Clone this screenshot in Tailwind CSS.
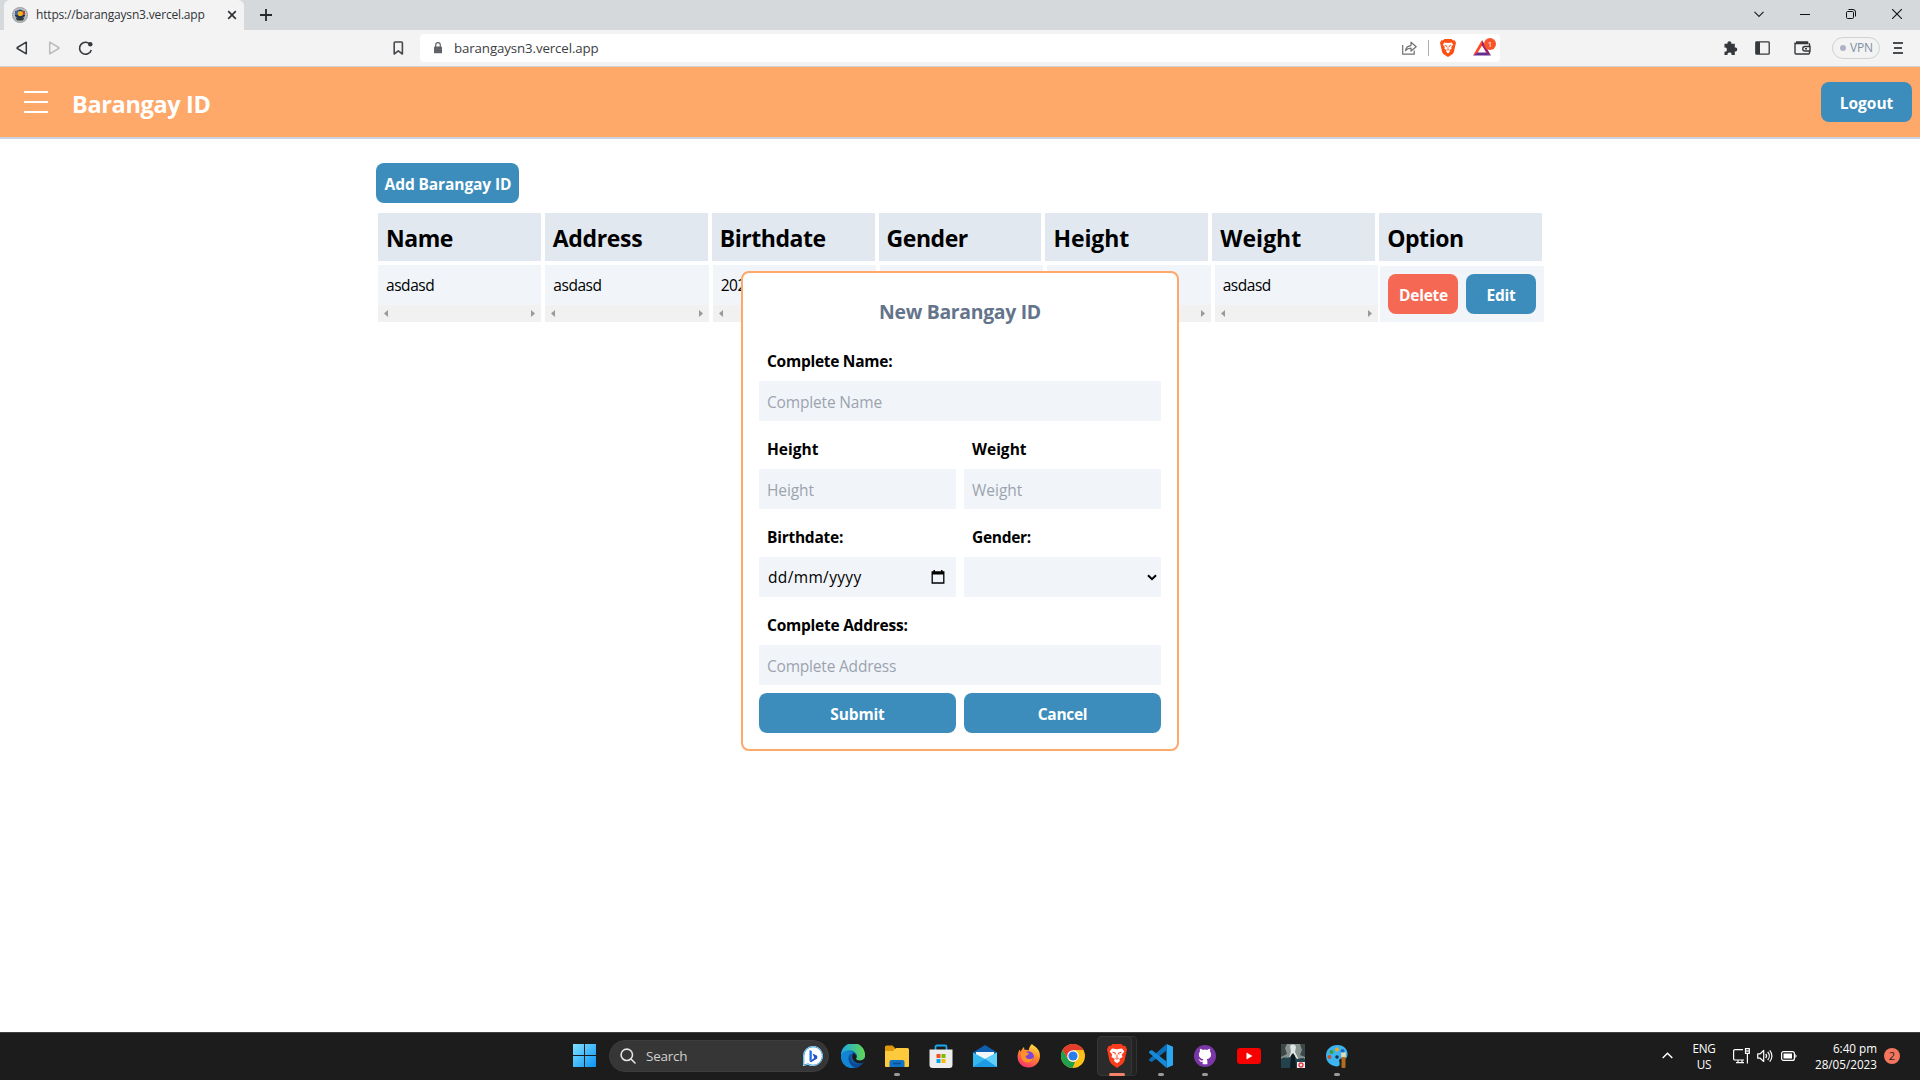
<!DOCTYPE html>
<html lang="en">
<head>
<meta charset="utf-8">
<title>Barangay ID</title>
<script src="https://cdn.jsdelivr.net/npm/@tailwindcss/browser@4"></script>
</head>
<body class="relative flex h-[1080px] w-[1920px] flex-col overflow-hidden bg-white font-['Open_Sans',sans-serif] text-[15.5px] leading-6 text-black">

<!-- Tab strip -->
<div class="flex h-[30px] shrink-0 items-center bg-[#d5d9dc] pl-1">
  <div class="flex h-full w-[240px] items-center rounded-t-md bg-[#f3f3f3] pl-2 text-[#2f3338]">
    <svg class="size-4" viewBox="0 0 16 16"><circle cx="8" cy="8" r="8" fill="#b9bdc0"/><circle cx="8" cy="8" r="7.4" fill="none" stroke="#8b8f92" stroke-width="1" stroke-dasharray="1 1"/><path d="M3 4.5 8 2.5l5 2V9L8 13.5 3 9Z" fill="#27364a"/><path d="M3 4.5 7 3v5H3Z" fill="#3f66a8"/><path d="M10 4l3 .6V8h-3Z" fill="#b8453b"/><circle cx="8.3" cy="6.5" r="2.6" fill="#f1b51c"/><path d="M3.5 10.5 8 12l4.500-1.500L11 13.500H5Z" fill="#2f3c3a"/></svg>
    <span class="ml-2 text-[12px] tracking-[-0.17px]">https://barangaysn3.vercel.app</span>
    <svg class="ml-[22px] size-[10px]" viewBox="0 0 10 10" stroke="#303438" stroke-width="1.7"><path d="m1.200 1.200 7.600 7.600M8.800 1.200 1.200 8.800"/></svg>
  </div>
  <svg class="ml-4 size-3" viewBox="0 0 12 12" stroke="#26292c" stroke-width="1.800"><path d="M6 0v12M0 6h12"/></svg>
  <div class="ml-auto flex items-center pr-[18px] pb-[2px]">
    <svg class="mr-9 h-[10px] w-[10px]" viewBox="0 0 10 10" fill="none" stroke="#222" stroke-width="1.200"><path d="m.5 2.800 4.500 4.700 4.500-4.700"/></svg>
    <svg class="mr-9 size-[10px]" viewBox="0 0 10 10" stroke="#111"><path d="M0 5.500h10"/></svg>
    <svg class="mr-9 size-[10px]" viewBox="0 0 10 10" fill="none" stroke="#111"><rect x=".5" y="2.500" width="7" height="7" rx="1.200"/><path d="M2.500.5H7A2.500 2.500 0 0 1 9.500 3v4.500"/></svg>
    <svg class="size-[10px]" viewBox="0 0 10 10" stroke="#111" stroke-width="1.100"><path d="m0 0 10 10M10 0 0 10"/></svg>
  </div>
</div>

<!-- Toolbar -->
<div class="flex h-[37px] shrink-0 items-center border-b border-[#d0d3d6] bg-[#f3f3f3] pl-[16px]">
  <svg class="h-[14px] w-3" viewBox="0 0 12 14" fill="none" stroke="#36393d" stroke-width="1.500" stroke-linejoin="round"><path d="M10.300 1.200v11.600L1.300 7.500a.6.6 0 0 1 0-1Z"/></svg>
  <svg class="ml-5 h-[14px] w-3" viewBox="0 0 12 14" fill="none" stroke="#b9bbbd" stroke-width="1.500" stroke-linejoin="round"><path d="M1.700 1.200v11.600l9-5.300a.6.6 0 0 0 0-1Z"/></svg>
  <svg class="ml-[18px] size-[15px]" viewBox="0 0 15 15"><path d="M12.600 4A6 6 0 1 0 13.300 9" fill="none" stroke="#36393d" stroke-width="1.600"/><circle cx="12.300" cy="3.300" r="2.200" fill="#36393d"/></svg>
  <svg class="ml-[300px] h-[14px] w-[11px]" viewBox="0 0 11 14" fill="none" stroke="#46494d" stroke-width="1.600" stroke-linejoin="round"><path d="M1.200 2a1 1 0 0 1 1-1h6.200a1 1 0 0 1 1 1v11L5.300 9.800 1.200 13Z"/></svg>
  <div class="ml-4 flex h-7 w-[1080px] items-center rounded bg-white pl-3.5">
    <svg class="h-3 w-2" viewBox="0 0 8 12"><path d="M1.700 5.500V3a2.300 2.300 0 0 1 4.600 0v2.500" fill="none" stroke="#5f6368" stroke-width="1.200"/><rect y="4.500" width="8" height="6.800" rx=".9" fill="#5f6368"/></svg>
    <span class="ml-3 text-[13.3px] tracking-[-0.12px] text-[#3c4043]">barangaysn3.vercel.app</span>
    <svg class="ml-auto h-[14px] w-[15px]" viewBox="0 0 15 14" fill="none" stroke="#6d7073" stroke-width="1.200" stroke-linejoin="round"><path d="M.7 4v9.200h11.500V9.500M3.500 9.600c.5-3 2.500-4.800 5.500-5V1.200l5.200 4.500L9 10V7.200c-2.400 0-4 .7-5.500 2.400Z"/></svg>
    <div class="ml-[11px] h-4 w-px bg-[#aeb0b2]"></div>
    <svg class="ml-[11px] h-[18px] w-4" viewBox="0 0 16 18"><path d="m4.500 0-1.300 1.200L1 1.600 0 4.300l.5 1.500 1.700 7.400 1.400 2L8 18l4.400-2.800 1.400-2 1.700-7.400.5-1.500-1-2.700-2.200-.4L11.500 0Z" fill="#fb4f14"/><path d="m4.300 3.500 3.700.6 3.700-.6 1.500 2.200-2 2.300.4 1.800-2.200 1.500L10 12.600 8 14.500 6 12.600l.6-1.300-2.200-1.500L4.800 8l-2-2.300Z" fill="#fff"/><path d="m4.600 6.300 2.300.6-.4 1.200M11.400 6.300l-2.300.6.4 1.200M8 8v2.300M6.800 10.500 8 11.200l1.200-.7" stroke="#fb4f14" fill="none" stroke-width=".8"/></svg>
    <div class="relative ml-[17px] mr-1 h-[18px] w-[23px]">
      <svg class="h-[18px] w-[18px]" viewBox="0 0 18 18"><path d="M9 1 0 16.500l4.500-2.500L9 6.500Z" fill="#ff4724"/><path d="m9 1 9 15.500-4.500-2.500L9 6.500Z" fill="#9e1f63"/><path d="m0 16.500 4.500-3h9l4.500 3Z" fill="#662d91"/></svg>
      <div class="absolute -top-px right-0 flex size-3 items-center justify-center rounded-full bg-[#fb542b] text-[8px] leading-none text-white">1</div>
    </div>
  </div>
  <div class="ml-auto flex items-center pr-[17px]">
    <svg class="h-[15px] w-[15px]" viewBox="0 0 15 15" fill="#34383c"><path d="M1.500 2.800h3a2 2 0 1 1 3.800 0h3.500v3.700a2 2 0 1 1 0 3.900V14H8.500a2 2 0 1 0-3.900 0H1.500v-3.400a2 2 0 1 0 0-3.900Z"/></svg>
    <svg class="ml-[17px] h-[14px] w-[15px]" viewBox="0 0 15 14"><rect x=".8" y=".8" width="13.400" height="12.400" rx=".8" fill="none" stroke="#34383c" stroke-width="1.300"/><path d="M1 1h4v12H1Z" fill="#34383c"/></svg>
    <svg class="ml-6 h-[14px] w-[17px]" viewBox="0 0 17 14" fill="none" stroke="#34383c" stroke-width="1.400"><path d="M15.500 5V3.500a1 1 0 0 0-1-1M1 2.500h13M2 1h11.500v1.500M1 1.500V12a1 1 0 0 0 1 1h12.500a1 1 0 0 0 1-1v-1.500M16 5.500h-5a2.200 2.200 0 0 0 0 4.500h5Z"/><path d="M11 7.700h2"/></svg>
    <div class="ml-[21px] flex h-[22px] w-12 items-center rounded-full border border-[#cfd1d3] pl-[7px] text-[12px] tracking-[-0.2px] text-[#7f8fa3]"><i class="mr-1 size-1.5 rounded-full bg-[#b0b3c8]"></i>VPN</div>
    <svg class="ml-[13px] h-3 w-[10px]" viewBox="0 0 10 12" stroke="#4a4d50" stroke-width="1.900"><path d="M0 1h10M1 6h8M0 11h10"/></svg>
  </div>
</div>

<!-- App header -->
<header class="flex h-[72px] shrink-0 items-center border-b-2 border-[#cbd5e1] bg-[#fea869] pr-2 pl-6">
  <div class="flex w-6 flex-col gap-2"><i class="h-0.5 bg-white"></i><i class="h-0.5 bg-white"></i><i class="h-0.5 bg-white"></i></div>
  <h1 class="ml-6 pt-[3px] text-[23.5px] font-bold tracking-[-0.36px] text-white">Barangay ID</h1>
  <button class="ml-auto h-10 w-[91px] rounded-lg bg-[#3c8dbc] pt-px font-bold text-white">Logout</button>
</header>

<main class="mx-auto w-[1168px] grow pt-6">
  <button class="h-10 w-[143px] rounded-lg bg-[#3c8dbc] pt-px pl-px font-bold tracking-[-0.1px] text-white">Add Barangay ID</button>
  <div class="mt-[10px] grid h-12 grid-cols-7 text-[23px] font-bold tracking-[-0.45px]">
    <div class="mx-0.5 bg-[#e2e8f0] pt-[13px] pl-2">Name</div>
    <div class="mx-0.5 bg-[#e2e8f0] pt-[13px] pl-2 tracking-[-0.35px]">Address</div>
    <div class="mx-0.5 bg-[#e2e8f0] pt-[13px] pl-2">Birthdate</div>
    <div class="mx-0.5 bg-[#e2e8f0] pt-[13px] pl-2">Gender</div>
    <div class="mx-0.5 bg-[#e2e8f0] pt-[13px] pl-2 tracking-[-0.1px]">Height</div>
    <div class="mx-0.5 bg-[#e2e8f0] pt-[13px] pl-2 tracking-[0px]">Weight</div>
    <div class="mx-0.5 bg-[#e2e8f0] pt-[13px] pl-2">Option</div>
  </div>
  <div id="row" class="mt-1 grid h-[57px] grid-cols-[repeat(6,167.33px)_164px]">
    <div class="order-last mt-px flex gap-2 bg-[#f1f5f9] p-2 font-bold text-white">
      <button class="h-10 w-[70px] rounded-lg bg-[#f56954] pt-px pl-px tracking-[-0.25px]">Delete</button>
      <button class="h-10 w-[70px] rounded-lg bg-[#3c8dbc] pt-px tracking-[-0.25px]">Edit</button>
    </div>
  </div>
</main>

<template id="cell">
  <div class="mx-0.5 flex flex-col bg-[#f1f5f9]">
    <div class="h-10 pt-2 pl-2 tracking-[-0.45px]"></div>
    <div class="flex h-[17px] items-center justify-between bg-[#f1f1f1] px-1.5">
      <svg class="h-[7px] w-1" viewBox="0 0 4 7" fill="#999"><path d="M4 0v7L0 3.500Z"/></svg>
      <svg class="h-[7px] w-1" viewBox="0 0 4 7" fill="#999"><path d="M0 0v7l4-3.500Z"/></svg>
    </div>
  </div>
</template>
<script>
  for (const value of ['asdasd', 'asdasd', '2023', '', '', 'asdasd']) {
    const cell = document.getElementById('cell').content.cloneNode(true);
    cell.querySelector('div > div').textContent = value;
    document.getElementById('row').append(cell);
  }
</script>

<!-- New record dialog -->
<form class="absolute top-[271px] left-[741px] w-[438px] rounded-lg border-2 border-[#fea869] bg-white p-4">
  <h2 class="mb-[6px] h-[46px] text-center text-[19.4px] leading-[46px] font-bold tracking-[-0.3px] text-[#64748b]">New Barangay ID</h2>
  <div class="grid grid-cols-2 gap-2">
    <div class="col-span-2">
      <div class="h-10 px-2 pt-2 font-bold tracking-[-0.27px]">Complete Name:</div>
      <div class="h-10 bg-[#f1f5f9] px-2 pt-[9px] tracking-[-0.16px] text-[#9ca3af]">Complete Name</div>
    </div>
    <div>
      <div class="h-10 px-2 pt-2 font-bold">Height</div>
      <div class="h-10 bg-[#f1f5f9] px-2 pt-[9px] tracking-[-0.1px] text-[#9ca3af]">Height</div>
    </div>
    <div>
      <div class="h-10 px-2 pt-2 font-bold">Weight</div>
      <div class="h-10 bg-[#f1f5f9] px-2 pt-[9px] text-[#9ca3af]">Weight</div>
    </div>
    <div>
      <div class="h-10 px-2 pt-2 font-bold tracking-[-0.25px]">Birthdate:</div>
      <div class="flex h-10 items-center justify-between bg-[#f1f5f9] pr-[11px] pl-[9px]"><span class="tracking-[0.35px]">dd/mm/yyyy</span>
        <svg class="h-[14px] w-[14px]" viewBox="0 0 14 14"><path d="M1.200 2h11.600v11H1.200Z" fill="none" stroke="#000" stroke-width="1.300"/><path d="M1 2h12v2.500H1ZM2.500 0H4v2H2.500ZM10 0h1.500v2H10Z"/></svg>
      </div>
    </div>
    <div>
      <div class="h-10 px-2 pt-2 font-bold tracking-[-0.3px]">Gender:</div>
      <div class="flex h-10 items-center justify-end bg-[#f1f5f9] pr-1">
        <svg class="h-[7px] w-[10px]" viewBox="0 0 10 7" fill="none" stroke="#000" stroke-width="2"><path d="m1 1.200 4 4 4-4"/></svg>
      </div>
    </div>
    <div class="col-span-2">
      <div class="h-10 px-2 pt-2 font-bold tracking-[-0.24px]">Complete Address:</div>
      <div class="h-10 bg-[#f1f5f9] px-2 pt-[9px] tracking-[-0.2px] text-[#9ca3af]">Complete Address</div>
    </div>
    <button type="button" class="h-10 rounded-lg bg-[#3c8dbc] pt-px font-bold tracking-[-0.15px] text-white">Submit</button>
    <button type="button" class="h-10 rounded-lg bg-[#3c8dbc] pt-px font-bold tracking-[-0.3px] text-white">Cancel</button>
  </div>
</form>

<!-- Taskbar -->
<div class="flex h-12 shrink-0 items-center border-t border-[#414141] bg-[#1c1c1c] pb-[2px] pl-[573px] text-white">
  <svg class="size-[23px]" viewBox="0 0 23 23"><defs><linearGradient id="w" x2="1" y2="1"><stop stop-color="#7fe0ff"/><stop offset="1" stop-color="#0a93f5"/></linearGradient></defs><path d="M0 0h11v11H0ZM12 0h11v11H12ZM0 12h11v11H0ZM12 12h11v11H12Z" fill="url(#w)"/></svg>
  <div class="ml-[13px] flex h-8 w-[220px] items-center rounded-full border border-[#3d3d3d] bg-[#363636] pr-[5px] pl-[10px]">
    <svg class="size-4" viewBox="0 0 16 16" fill="none" stroke="#e4e4e4" stroke-width="1.600" stroke-linecap="round"><circle cx="6.800" cy="6.800" r="5.700"/><path d="m11 11 4 4"/></svg>
    <span class="ml-[10px] text-[13.500px] tracking-[-0.25px] text-[#d0d0d0]">Search</span>
    <svg class="ml-auto size-5" viewBox="0 0 20 20"><path d="M10 0a10 10 0 1 1-5 18.700L0 20V10A10 10 0 0 1 10 0Z" fill="#fff"/><path d="M10 .8a9.200 9.200 0 1 1-4.800 17L.8 19V10A9.200 9.200 0 0 1 10 .8Z" fill="none" stroke="#2aa4ea" stroke-width="1"/><path d="m6.500 4 2.300 1v8.500l-2.300 1.800Z" fill="#1c6fe0"/><path d="m9.500 7.500 4.700 2.300v2.700L8 16.300l-1.500-1 4.800-3.200Z" fill="#2252c9"/></svg>
  </div>
  <div class="ml-0.5 flex">
    <div class="relative flex h-[47px] w-11 items-center justify-center">
      <svg class="size-6" viewBox="0 0 24 24"><defs><linearGradient id="e" x2="1"><stop stop-color="#1ba8e8"/><stop offset="1" stop-color="#62d84e"/></linearGradient></defs><circle cx="12" cy="12" r="12" fill="#0f67b5"/><path d="M0 11A12 12 0 0 1 24 11c.3 5-5.500 7-8.500 5-1.400-1 .5-1.500.5-4.200C15 6 5 4 0 11Z" fill="url(#e)"/><path d="M0 11c3-5 9-5 12.500-2C7 9 5.500 15 9 19c2 2.500 3 3.500 6 4.600C7 26-1 20 0 11Z" fill="#1385d2"/><path d="M12 9.500c-4 2-3 8 2 10 3 1 6 .5 8.500-1.500C21 21 17 24 14 23.900 7 21 6 11 12 9.500Z" fill="#0b4a94"/><path d="M12.500 9c2.500 1 3.700 3.200 2.800 5-.8 1.400.8 2.600 3.700 2.500 2 0 4-1 5-2.500v3c-2 2.500-6 3-9 1.500-4-2-5-6.500-2.500-9.500Z" fill="#1c1c1c"/></svg>
    </div>
    <div class="relative flex h-[47px] w-11 items-center justify-center">
      <svg class="size-6" viewBox="0 0 24 24"><path d="M0 3a1.500 1.500 0 0 1 1.500-1.500h6L10 4v6H0Z" fill="#e09a08"/><path d="M0 7h8l3-3h11.500A1.500 1.500 0 0 1 24 5.500V22a1 1 0 0 1-1 1H1a1 1 0 0 1-1-1Z" fill="#fcca3c"/><path d="M4.500 23v-5a2 2 0 0 1 2-2h11a2 2 0 0 1 2 2v5Z" fill="#1173c5"/><path d="M8 19.500h8" stroke="#0a4f91" stroke-width="1.500"/></svg>
      <i class="absolute top-[41px] h-[3px] w-1.5 rounded-full bg-[#9a9a9a]"></i>
    </div>
    <div class="relative flex h-[47px] w-11 items-center justify-center">
      <svg class="size-6" viewBox="0 0 24 24"><path d="M6.500 7V3A1.500 1.500 0 0 1 8 1.500h8A1.500 1.500 0 0 1 17.500 3v4" fill="none" stroke="#1ba7ee" stroke-width="1.800"/><path d="M.5 5.500h23V21a3 3 0 0 1-3 3h-17a3 3 0 0 1-3-3Z" fill="#ededed"/><path d="M7.500 10H11.500v4h-4Z" fill="#f25022"/><path d="M12.500 10h4v4h-4Z" fill="#7fba00"/><path d="M7.500 15h4v4h-4Z" fill="#00a4ef"/><path d="M12.500 15h4v4h-4Z" fill="#ffb900"/></svg>
    </div>
    <div class="relative flex h-[47px] w-11 items-center justify-center">
      <svg class="size-6" viewBox="0 0 24 24"><path d="M0 8.500 12 1l12 7.500V12H0Z" fill="#0f5fae"/><path d="M3 8h18v8H3Z" fill="#f3f6f8"/><path d="M0 8.500 12 15l12-6.500V23H0Z" fill="#36b8ef"/><path d="m12 15 12-6.500V23Z" fill="#5fd0fa"/><path d="m0 23 12-8 12 8Z" fill="#1d9be4"/></svg>
    </div>
    <div class="relative flex h-[47px] w-11 items-center justify-center">
      <svg class="size-6" viewBox="0 0 24 24"><defs><linearGradient id="f" x1=".8" x2=".3" y2="1"><stop stop-color="#ffe847"/><stop offset=".45" stop-color="#ff8a2a"/><stop offset="1" stop-color="#f5316f"/></linearGradient></defs><path d="M15 0c1.500 2 5 3 7 7 3 7-1 16.500-10.500 16.500C4 23.500-1 17 1 9.500c.3-1.500 1-3 2-4l.5 2.500C4.500 6 5.500 4 7 3l.5 3c2-.5 3 0 4 .5C12 4 13 1.500 15 0Z" fill="url(#f)"/><circle cx="11.500" cy="12.500" r="5.300" fill="#7a45d8"/><path d="M4 8c3-1 5 0 8 1.500-.5 2-3 1.500-3.500 3 1 3 5 3.500 8 1-1 5-8 7-11 2.500C4 13.500 3.500 10.500 4 8Z" fill="#ff9226"/></svg>
    </div>
    <div class="relative flex h-[47px] w-11 items-center justify-center">
      <svg class="size-6" viewBox="0 0 24 24"><circle cx="12" cy="12" r="12" fill="#fbc116"/><path d="M1.600 6A12 12 0 0 1 22.400 6H12v6l-5.200 3Z" fill="#e33b2e"/><path d="M1.600 6 6.800 15A6 6 0 0 0 12 18h2L11.500 24A12 12 0 0 1 1.600 6Z" fill="#1fa04f"/><circle cx="12" cy="12" r="5.800" fill="#fff"/><circle cx="12" cy="12" r="4.600" fill="#2b7de9"/></svg>
    </div>
    <div class="relative flex h-[47px] w-11 items-center justify-center">
      <div class="absolute top-1 left-1 h-10 w-[38px] rounded border border-[#323232] bg-[#222]"></div>
      <div class="absolute top-1 left-0.5 h-10 w-[35px] rounded border border-[#363636] bg-[#2b2b2b]"></div>
      <svg class="relative h-6 w-5" viewBox="0 0 20 24"><path d="M5.500 0 4 1.700l-2.500.3L0 5.500l.5 2 2 9.500L4.500 20l5.500 4 5.500-4 2-3 2-9.500.5-2L18.500 2 16 1.700 14.500 0Z" fill="#fb3d1c"/><path d="m5 4.500 5 .7 5-.7 2.300 3-2.500 3 .7 2.500-3.200 2 .7 2-3 2.300-3-2.300.7-2-3.200-2 .7-2.500-2.500-3Z" fill="#fff"/><path d="m5.500 8.200 3 .9-.5 1.500M14.500 8.200l-3 .9.500 1.500M10 10.500V14M8.300 14.300l1.700.9 1.700-.9" stroke="#fb3d1c" fill="none"/></svg>
      <i class="absolute top-[41px] left-[14px] h-[3px] w-4 rounded-full bg-[#f5836a]"></i>
    </div>
    <div class="relative flex h-[47px] w-11 items-center justify-center">
      <svg class="size-6" viewBox="0 0 24 24"><path d="M17.500 0 24 2.800v18.400L17.500 24Z" fill="#2aa9f2"/><path d="M17.500 0v6.500L2.800 18 0 16.500v-1.300Z" fill="#0d6fb8"/><path d="M17.500 24v-6.500L2.800 6 0 7.500v1.300Z" fill="#1789d6"/></svg>
      <i class="absolute top-[41px] h-[3px] w-1.5 rounded-full bg-[#9a9a9a]"></i>
    </div>
    <div class="relative flex h-[47px] w-11 items-center justify-center">
      <svg class="size-[22px]" viewBox="0 0 22 22"><circle cx="11" cy="11" r="11" fill="#7b37a8"/><path d="M8.700 19.200v-2.400c-2.500.5-3-1-3.400-1.800-.3-.4-.8-.8-.9-1 1.300-.3 1.800 1.500 2.900 1.600.6.100 1.200-.1 1.500-.3.100-.6.300-1 .6-1.300C7 13.700 4.900 12.700 4.900 9.200c0-1.100.4-2 1.100-2.800-.2-.6-.3-1.700.1-2.700 1.200 0 2.200.8 2.700 1.200a9 9 0 0 1 4.400 0c.5-.4 1.500-1.200 2.700-1.200.4 1 .3 2.100.1 2.700.7.800 1.100 1.700 1.100 2.800 0 3.500-2.100 4.500-4.500 4.800.5.500.8 1.200.8 2.200v3Z" fill="#fff"/></svg>
      <i class="absolute top-[41px] h-[3px] w-1.5 rounded-full bg-[#9a9a9a]"></i>
    </div>
    <div class="relative flex h-[47px] w-11 items-center justify-center">
      <svg class="h-4 w-6" viewBox="0 0 24 16"><rect width="24" height="16" rx="3" fill="#f60000"/><path d="m9.500 4.500 6 3.500-6 3.500Z" fill="#fff"/></svg>
    </div>
    <div class="relative flex h-[47px] w-11 items-center justify-center">
      <svg class="size-6" viewBox="0 0 24 24"><path d="M0 0h24v24H0Z" fill="#87928f"/><path d="M0 0h6l-2 4 2 6-6 3ZM24 0h-5l2 6-2 5 5 2Z" fill="#3b4748"/><path d="M9 2c2-2 5-2 6 1l-1 5 4 8H7l3-8Z" fill="#dfe5e3"/><path d="M0 15c3-3 6 0 9-2l2-3 2 1 3 4c3 0 5-2 8 0v9H0Z" fill="#23424b"/><path d="m10 12 2-3 2 3 1 12H9Z" fill="#0c1b20"/><path d="M16 18h8v6h-8Z" fill="#f4e8e8"/><circle cx="20" cy="21" r="2" fill="none" stroke="#e23a45" stroke-width="1.300"/></svg>
    </div>
    <div class="relative flex h-[47px] w-11 items-center justify-center">
      <svg class="size-6" viewBox="0 0 24 24"><path d="M12.500 1C19 1 23 5.500 22.500 11c-.3 4-3 4-5 3.500-3-.5-4 1.500-3 4 .8 2.500-.5 4-3 4C5 22 1 17 1 12 1 5 6 1 12.500 1Z" fill="#3bb4f0"/><circle cx="12" cy="5.500" r="2" fill="#f0a91c"/><circle cx="6.500" cy="8" r="2" fill="#3f9c35"/><circle cx="4.500" cy="13" r="2" fill="#c8532f"/><circle cx="17.500" cy="7" r="2" fill="#1e66c4"/><circle cx="12" cy="13" r="1.800" fill="#16365a"/><path d="M16 8.500h5l-.5 5.500h-4Z" fill="#e8d9b5"/><path d="M16.500 13h4v9.500a2 2 0 0 1-4 0Z" fill="#b06d20"/></svg>
      <i class="absolute top-[41px] h-[3px] w-1.5 rounded-full bg-[#9a9a9a]"></i>
    </div>
  </div>
  <div class="ml-auto flex items-center pr-5 text-[11.700px] leading-4">
    <svg class="h-[7px] w-[11px]" viewBox="0 0 11 7" fill="none" stroke="#fff" stroke-width="1.500"><path d="m.7 6 4.800-4.800L10.300 6"/></svg>
    <div class="ml-[19px] w-6 text-center tracking-[-0.3px]">ENG<br>US</div>
    <svg class="ml-[17px] h-4 w-[17px]" viewBox="0 0 17 16" fill="none" stroke="#fff" stroke-width="1.200"><path d="M10 1.600H2A1.400 1.400 0 0 0 .6 3v7.500A1.400 1.400 0 0 0 2 12h9M5 12v2.500M9 12v2.500M3 14.700h8M12.500.7h3.800v4.600h-3.800ZM14.400 5.500v10"/><path d="M12.500 3h4"/></svg>
    <svg class="ml-[7px] h-[14px] w-4" viewBox="0 0 16 14" fill="none" stroke="#fff" stroke-width="1.200" stroke-linejoin="round"><path d="M.7 4.800h2.500L6.700 1.500v11L3.200 9.200H.7ZM8.700 5a3 3 0 0 1 0 4M10.700 3a6 6 0 0 1 0 8M12.700 1.300a8.500 8.500 0 0 1 0 11.400"/></svg>
    <svg class="ml-2 h-[10px] w-4" viewBox="0 0 16 10"><rect x=".6" y=".6" width="12.800" height="8.800" rx="2" fill="none" stroke="#fff" stroke-width="1.200"/><path d="M2.500 2.500h8.500v5H2.500ZM14.300 3.200c1.700.3 1.700 3.300 0 3.600Z" fill="#fff"/></svg>
    <div class="ml-[15px] w-[65px] text-right">6:40 pm<br>28/05/2023</div>
    <div class="ml-[7px] flex size-4 items-center justify-center rounded-full bg-[#f5765e] text-[11px] leading-none text-[#1c1c1c]">2</div>
  </div>
</div>
</body>
</html>
